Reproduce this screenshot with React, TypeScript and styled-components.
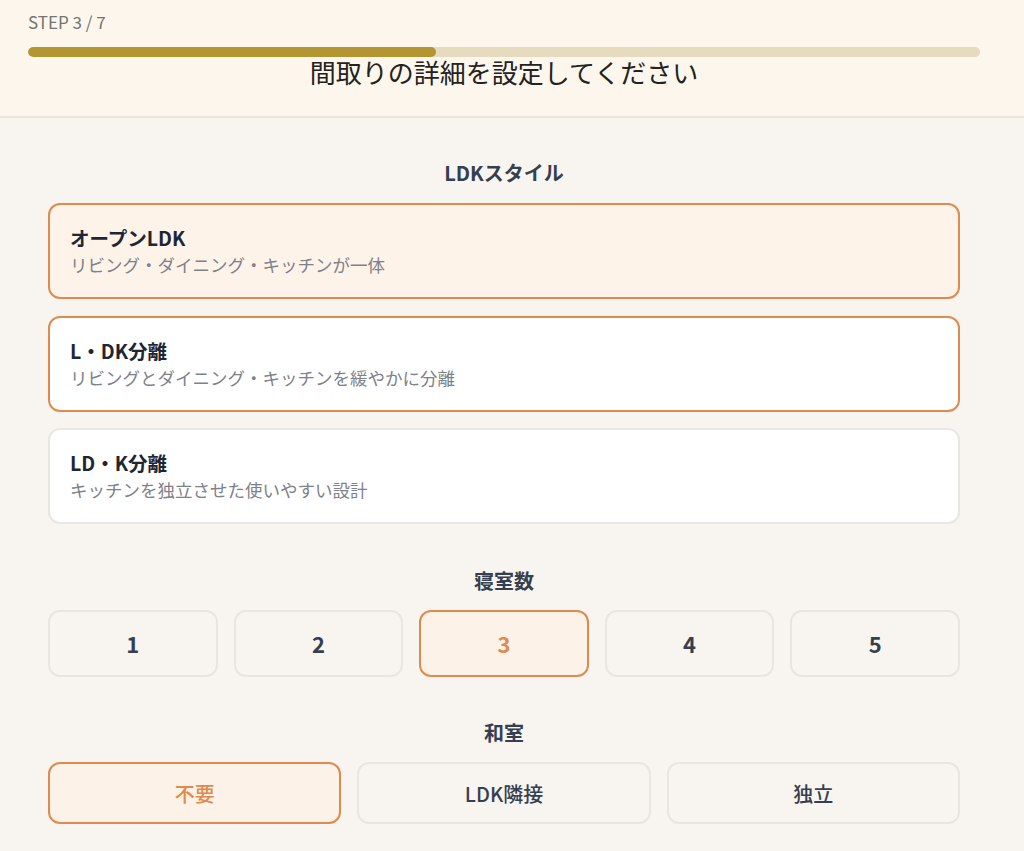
import { useState } from 'react';
import styled, { createGlobalStyle } from 'styled-components';

const orange = '#df8a4e';
const ink = '#363f4f';

const GlobalStyle = createGlobalStyle`
	html, body {
		margin: 0;
		padding: 0;
		background: #f8f5f0;
	}
	body {
		font-family: 'Noto Sans CJK JP', 'Noto Sans', sans-serif;
		color: ${ink};
	}
	* {
		box-sizing: border-box;
	}
`;

const layouts = [
	{ title: 'オープンLDK', desc: 'リビング・ダイニング・キッチンが一体' },
	{ title: 'L・DK分離', desc: 'リビングとダイニング・キッチンを緩やかに分離' },
	{ title: 'LD・K分離', desc: 'キッチンを独立させた使いやすい設計' },
];

const bedrooms = [1, 2, 3, 4, 5];
const washitsu = ['不要', 'LDK隣接', '独立'];

const STEP = 3;
const TOTAL = 7;

const App = () => {
	const [layout, setLayout] = useState(0);
	const [rooms, setRooms] = useState(3);
	const [wa, setWa] = useState('不要');

	return (
		<>
			<GlobalStyle />
			<Header>
				<StepLabel>
					STEP {STEP} / {TOTAL}
				</StepLabel>
				<Track>
					<Fill style={{ width: `${(STEP / TOTAL) * 100}%` }} />
				</Track>
				<Title>間取りの詳細を設定してください</Title>
			</Header>
			<Main>
				<Section>
					<SectionTitle>LDKスタイル</SectionTitle>
					<CardList>
						{layouts.map((l, i) => (
							<Card
								key={l.title}
								$selected={i === layout}
								$outlined={i <= 1}
								onClick={() => setLayout(i)}
							>
								<CardTitle>{l.title}</CardTitle>
								<CardDesc>{l.desc}</CardDesc>
							</Card>
						))}
					</CardList>
				</Section>
				<Section>
					<SectionTitle>寝室数</SectionTitle>
					<ChoiceGrid $cols={5}>
						{bedrooms.map(n => (
							<NumberButton
								key={n}
								$selected={n === rooms}
								onClick={() => setRooms(n)}
							>
								{n}
							</NumberButton>
						))}
					</ChoiceGrid>
				</Section>
				<Section>
					<SectionTitle>和室</SectionTitle>
					<ChoiceGrid $cols={3}>
						{washitsu.map(w => (
							<TextButton
								key={w}
								$selected={w === wa}
								onClick={() => setWa(w)}
							>
								{w}
							</TextButton>
						))}
					</ChoiceGrid>
				</Section>
			</Main>
		</>
	);
};

const Header = styled.header`
	background: #fdf6ec;
	border-bottom: 2px solid #ece4d6;
	padding: 12px 44px 29px 28px;
`;

const StepLabel = styled.div`
	font-size: 17px;
	line-height: 20px;
	color: #747474;
`;

const Track = styled.div`
	margin-top: 15px;
	height: 10px;
	border-radius: 5px;
	background: #e6dabf;
	overflow: hidden;
`;

const Fill = styled.div`
	height: 100%;
	border-radius: 5px;
	background: #b39632;
`;

const Title = styled.h1`
	margin: 0;
	text-align: center;
	font-size: 26px;
	line-height: 30px;
	font-weight: 400;
	color: #222;
`;

const Main = styled.main`
	padding: 42px 64px 40px 48px;
	display: flex;
	flex-direction: column;
	gap: 43.5px;
`;

const Section = styled.section`
	display: flex;
	flex-direction: column;
	gap: 16px;
`;

const SectionTitle = styled.h2`
	margin: 0;
	text-align: center;
	font-size: 20px;
	line-height: 26px;
	font-weight: 700;
	color: ${ink};
`;

const CardList = styled.div`
	display: flex;
	flex-direction: column;
	gap: 16.5px;
	margin-top: 1px;
`;

const Card = styled.div<{ $selected: boolean; $outlined: boolean }>`
	height: 96px;
	padding: 0 20px;
	display: flex;
	flex-direction: column;
	justify-content: center;
	gap: 2px;
	border-radius: 12px;
	cursor: pointer;
	background: ${p => (p.$selected ? '#fdf3e9' : '#fff')};
	border: 2px solid ${p => (p.$outlined ? orange : '#e9e7e4')};
`;

const CardTitle = styled.div`
	font-size: 19.5px;
	line-height: 26px;
	font-weight: 700;
	color: #1f2633;
`;

const CardDesc = styled.div`
	font-size: 17.5px;
	line-height: 24px;
	color: #7d8189;
`;

const ChoiceGrid = styled.div<{ $cols: number }>`
	display: grid;
	grid-template-columns: repeat(${p => p.$cols}, 1fr);
	gap: 16px;
`;

const ChoiceBase = styled.button<{ $selected: boolean }>`
	font-family: inherit;
	border-radius: 12px;
	cursor: pointer;
	display: flex;
	align-items: center;
	justify-content: center;
	border: 2px solid ${p => (p.$selected ? orange : '#e9e6e2')};
	background: ${p => (p.$selected ? '#fdf2e7' : '#f8f5f0')};
	color: ${p => (p.$selected ? orange : ink)};
`;

const NumberButton = styled(ChoiceBase)`
	height: 67px;
	font-size: 22px;
	font-weight: 700;
`;

const TextButton = styled(ChoiceBase)`
	height: 62px;
	font-size: 20px;
	font-weight: 500;
`;

export default App;
